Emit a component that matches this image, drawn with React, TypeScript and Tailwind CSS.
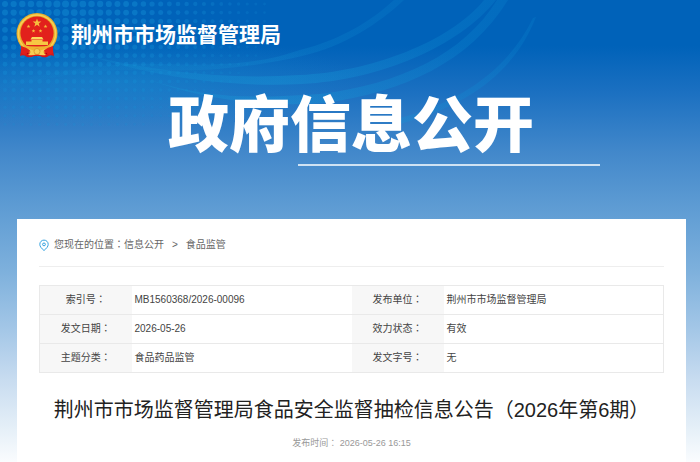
import React from 'react';

const dots: { x: number; y: number; r: number; o: number }[] = [];
for (let row = 0; row < 15; row++) {
  for (let col = 0; col < 31; col++) {
    const x = 5 + col * 8.65;
    const y = 4 + row * 8.6;
    const fade = 1 - Math.hypot((x - 60) / 225, (y - 8) / 135);
    if (fade > 0.05) {
      dots.push({ x, y, r: 1.2 + fade * 2.4, o: Math.min(0.45, 0.12 + fade * 0.45) });
    }
  }
}

const rows = [
  [
    { label: '索引号', value: 'MB1560368/2026-00096' },
    { label: '发布单位', value: '荆州市市场监督管理局' },
  ],
  [
    { label: '发文日期', value: '2026-05-26' },
    { label: '效力状态', value: '有效' },
  ],
  [
    { label: '主题分类', value: '食品药品监管' },
    { label: '发文字号', value: '无' },
  ],
];

// full-width colon, centred in its cell
function Colon() {
  return <span className="font-['Noto_Sans_CJK_TC',sans-serif] leading-none">：</span>;
}

function Backdrop() {
  return (
    <svg className="absolute left-0 top-0" width="700" height="150" viewBox="0 0 700 150" fill="none" aria-hidden="true">
      <defs>
        <radialGradient id="glow" cx="0.5" cy="0.5" r="0.5">
          <stop offset="0" stopColor="#18a0dc" stopOpacity="0.3" />
          <stop offset="1" stopColor="#18a0dc" stopOpacity="0" />
        </radialGradient>
        <linearGradient id="wave" x1="0" y1="0" x2="560" y2="0" gradientUnits="userSpaceOnUse">
          <stop offset="0" stopColor="#16a0dc" stopOpacity="0.05" />
          <stop offset="0.5" stopColor="#16a0dc" stopOpacity="0.32" />
          <stop offset="1" stopColor="#0b8ad2" stopOpacity="0.2" />
        </linearGradient>
      </defs>
      <ellipse cx="110" cy="82" rx="260" ry="46" fill="url(#glow)" />
      {dots.map((d, i) => (
        <circle key={i} cx={d.x} cy={d.y} r={d.r} fill="#1593d8" opacity={d.o} />
      ))}
      <path d="M0 84C60 70 110 62 160 64C220 66 260 64 300 50C340 40 370 22 394 0H404C378 24 345 46 302 56C250 68 200 72 150 70C100 68 50 76 0 90Z" fill="url(#wave)" opacity="0.6" />
      <path d="M90 56C160 72 230 80 300 75C370 72 450 42 484 0H496C460 46 380 80 302 84C230 88 150 76 90 56Z" fill="url(#wave)" />
      <path d="M150 80C210 100 260 98 320 94C400 84 464 54 497 0H508C470 62 404 92 324 103C260 108 200 98 150 80Z" fill="url(#wave)" />
      <path d="M400 118C460 102 508 70 533 18L536 17C516 68 474 104 400 124Z" fill="url(#wave)" />
    </svg>
  );
}

const STAR = '0,-10 2.4,-3.2 9.5,-3.1 3.8,1.2 5.9,8.1 0,4 -5.9,8.1 -3.8,1.2 -9.5,-3.1 -2.4,-3.2';

function Emblem() {
  return (
    <svg className="h-[46px] w-11 shrink-0" viewBox="0 0 44 46" aria-hidden="true">
      <path d="M6 30Q7 37 5 44Q9 42 12 45Q16 46 19 44H25Q28 46 32 45Q35 42 39 44Q37 37 38 30Z" fill="#d81718" />
      <path d="M8 35Q9 39 13 42M36 35Q35 39 31 42" stroke="#a90c12" strokeWidth="1" fill="none" />
      <circle cx="22" cy="21.5" r="20.5" fill="#e9ae2b" />
      <circle cx="22" cy="21.5" r="18.6" fill="none" stroke="#f7d055" strokeWidth="1.5" />
      <circle cx="22" cy="21" r="16.6" fill="#e2211c" />
      <polygon points={STAR} transform="translate(22 11) scale(0.46)" fill="#f6bd3e" />
      <polygon points={STAR} transform="translate(13.5 14.5) scale(0.2)" fill="#f6bd3e" />
      <polygon points={STAR} transform="translate(30.5 14.5) scale(0.2)" fill="#f6bd3e" />
      <polygon points={STAR} transform="translate(18.5 19) scale(0.2)" fill="#f6bd3e" />
      <polygon points={STAR} transform="translate(25.5 19) scale(0.2)" fill="#f6bd3e" />
      <path d="M17 25H27L28.5 27.5H15.5Z" fill="#fbd75c" />
      <path d="M16.5 28H27.5V29.5H33V33H11V29.5H16.5Z" fill="#f7c843" />
      <path d="M7 33Q22 36 37 33Q32 39 22 39Q12 39 7 33Z" fill="#efb331" />
      <path d="M6 34Q11 35 16 39Q12 40 10 43L6 41ZM38 34Q33 35 28 39Q32 40 34 43L38 41Z" fill="#e01f1b" />
      <path d="M14 37Q18 38 22 40Q26 38 30 37L28 40L31 43Q26 44 22 42Q18 44 13 43L16 40Z" fill="#f6cf55" />
      <circle cx="22" cy="39.5" r="3" fill="#f6cf55" stroke="#d98a22" strokeWidth="0.7" />
    </svg>
  );
}

function PinIcon() {
  return (
    <svg className="h-3 w-3" viewBox="0 0 12 12" fill="none" stroke="#35a3e0" aria-hidden="true">
      <path d="M5 11.5C2.4 9.3 0.8 7.5 0.8 5.3A4.2 4.2 0 0 1 9.2 5.3C9.2 7.5 7.6 9.3 5 11.5Z" />
      <circle cx="5" cy="5.4" r="1.4" />
    </svg>
  );
}

export default function App() {
  return (
    <div className="relative flex min-h-screen flex-col overflow-hidden bg-[linear-gradient(#0062b9_0px,#0062b9_46px,#1b70c1_92px,#4489cb_155px,#5d9bd3_205px,#7db0dc_270px,#a4c7e7_330px,#c8dcf0_380px,#e6f0f8_430px,#fafcfe_462px)] font-['Liberation_Sans','Noto_Sans_CJK_SC',sans-serif]">
      <Backdrop />
      <header className="relative flex h-[70px] items-center gap-3 pl-[15px] text-white">
        <Emblem />
        <span className="text-[21px] leading-[30px] font-bold">荆州市市场监督管理局</span>
      </header>

      <div className="relative mx-auto flex w-[500px] max-w-full flex-col pt-[18px] pl-[68px] text-white">
        <h2 className="text-[61px] leading-[76px] font-black whitespace-nowrap">政府信息公开</h2>
        <div className="h-0.5 w-[302px] self-end bg-[#cfe2f3]" />
      </div>

      <main className="relative mt-[53px] mr-3.5 ml-[17px] flex-1 bg-white px-[22px] pt-4">
        <nav className="flex items-center gap-[3px] border-b border-[#eee] pb-[11px] text-[10px] leading-5 text-[#666]">
          <PinIcon />
          <div className="flex">
            <span>您现在的位置<Colon /></span>
            <a href="#info">信息公开</a>
            <span className="mx-2">&gt;</span>
            <a href="#food">食品监管</a>
          </div>
        </nav>

        <table className="mt-[18px] w-full table-fixed border-collapse border border-[#e9e9e9] text-[10px] leading-5 text-[#444]">
          <colgroup>
            <col className="w-[92px]" />
            <col />
            <col className="w-[92px]" />
            <col />
          </colgroup>
          <tbody>
            {rows.map((row) => (
              <tr key={row[0].label} className="h-[29px] border-b border-[#e9e9e9]">
                {row.map((cell) => (
                  <React.Fragment key={cell.label}>
                    <th scope="row" className="bg-[#f7f7f7] text-center font-normal">
                      {cell.label}
                      <Colon />
                    </th>
                    <td className="pl-[3px]">{cell.value}</td>
                  </React.Fragment>
                ))}
              </tr>
            ))}
          </tbody>
        </table>

        <h1 className="mt-[22px] text-center text-[20px] leading-[30px] text-[#222]">
          荆州市市场监督管理局食品安全监督抽检信息公告（2026年第6期）
        </h1>
        <p className="mt-2.5 text-center text-[9px] leading-4 text-[#999]">
          发布时间<Colon /> 2026-05-26 16:15
        </p>
      </main>
    </div>
  );
}
